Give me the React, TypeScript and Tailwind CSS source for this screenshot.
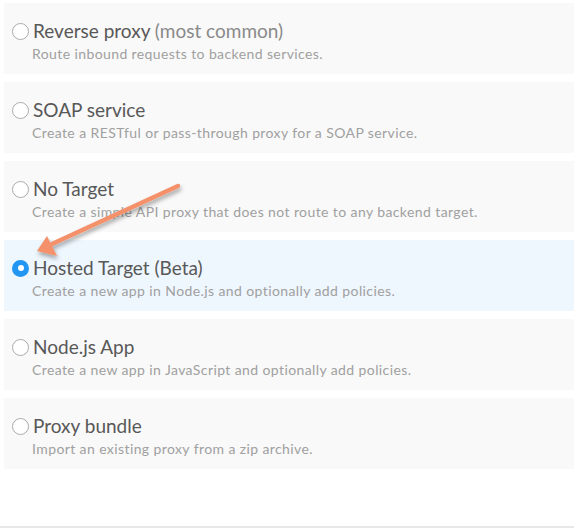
const options = [
  { id: 'reverse', title: 'Reverse proxy', note: '(most common)', desc: 'Route inbound requests to backend services.' },
  { id: 'soap', title: 'SOAP service', desc: 'Create a RESTful or pass-through proxy for a SOAP service.' },
  { id: 'notarget', title: 'No Target', desc: 'Create a simple API proxy that does not route to any backend target.' },
  { id: 'hosted', title: 'Hosted Target (Beta)', desc: 'Create a new app in Node.js and optionally add policies.' },
  { id: 'node', title: 'Node.js App', desc: 'Create a new app in JavaScript and optionally add policies.' },
  { id: 'bundle', title: 'Proxy bundle', desc: 'Import an existing proxy from a zip archive.' },
];

function Radio({ checked }: { checked: boolean }) {
  if (checked) {
    return (
      <span className="flex h-[17px] w-[17px] shrink-0 items-center justify-center rounded-full bg-[#2196f3]">
        <span className="h-[6px] w-[6px] rounded-full bg-white" />
      </span>
    );
  }
  return <span className="h-[17px] w-[17px] shrink-0 rounded-full border border-[#aaa] bg-white" />;
}

export default function App() {
  const selected = 'hosted';
  return (
    <div className="relative h-[528px] w-[574px] overflow-hidden bg-white font-['Lato','Noto_Sans',sans-serif]">
      <div className="flex flex-col gap-2 pl-[4px] pt-[3px]">
        {options.map((o) => (
          <div
            key={o.id}
            className={`h-[71px] pl-[8px] pt-[16px] ${o.id === selected ? 'bg-[#eef6fe]' : 'bg-[#f9f9f9]'}`}
          >
            <div className="flex items-center gap-[4px]">
              <Radio checked={o.id === selected} />
              <span className="text-[19px] leading-[24px] text-[#585858]">
                {o.title}
                {o.note && <span className="text-[#8a8a8a]"> {o.note}</span>}
              </span>
            </div>
            <p className="mt-[1px] pl-[20px] text-[14px] leading-[19px] tracking-[0.4px] text-[#a0a0a0]">{o.desc}</p>
          </div>
        ))}
      </div>
      <div className="absolute bottom-0 left-0 h-[2px] w-full bg-[#e8e8e8]" />
      <svg className="pointer-events-none absolute left-0 top-0" width="574" height="528">
        <defs>
          <filter id="sh" x="-20%" y="-20%" width="140%" height="160%">
            <feDropShadow dx="1" dy="3" stdDeviation="2" floodColor="#000" floodOpacity="0.35" />
          </filter>
        </defs>
        <g filter="url(#sh)">
          <line x1="178" y1="186" x2="52" y2="244" stroke="#f4916a" strokeWidth="4.5" strokeLinecap="round" />
          <polygon points="37,251 47,236 57,256" fill="#f4916a" />
        </g>
      </svg>
    </div>
  );
}
